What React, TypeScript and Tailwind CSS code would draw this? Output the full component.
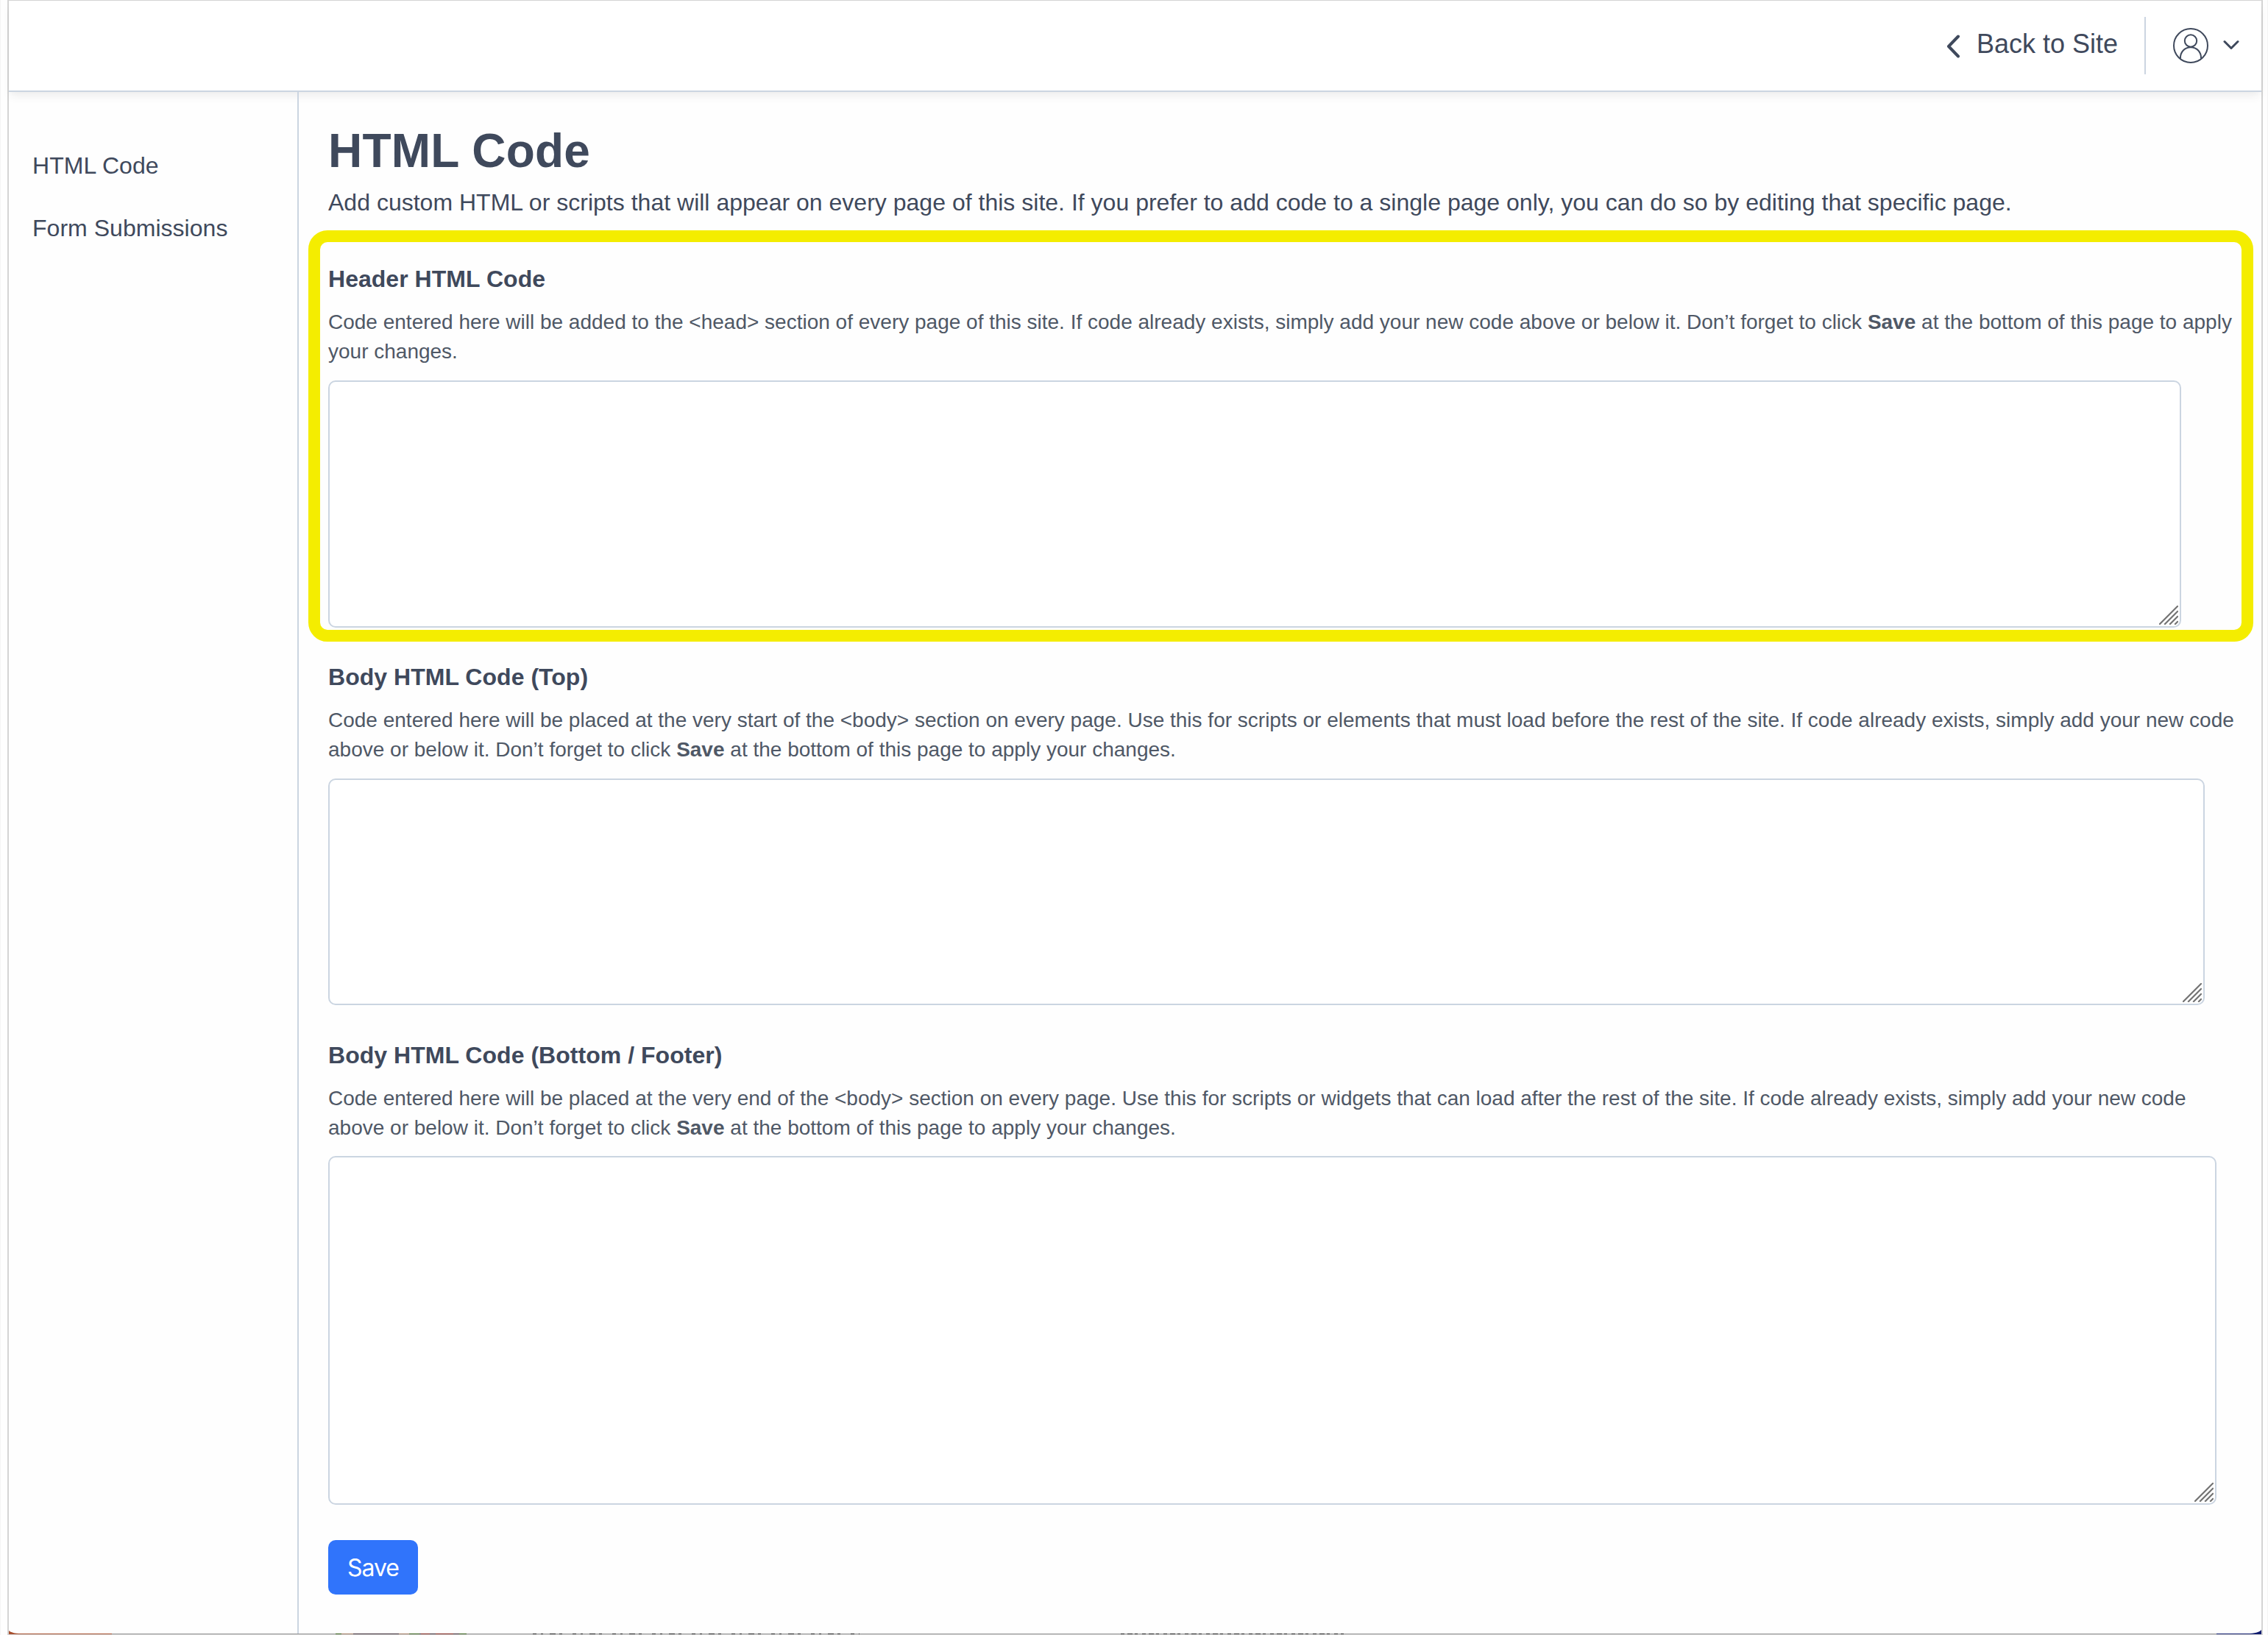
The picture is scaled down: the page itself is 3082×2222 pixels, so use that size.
import type { ReactNode } from "react";

const NavLink = ({ children }: { children: ReactNode }) => (
  <a href="#" className="block tracking-[0.03px] whitespace-nowrap">{children}</a>
);

const ResizeGrip = () => (
  <svg
    className="absolute right-1 bottom-1 h-[26px] w-[26px]"
    viewBox="0 0 26 26"
    stroke="#747474"
    strokeWidth="2.2"
    strokeLinecap="square"
  >
    <path d="M1 25L25 1M8 25L25 8M15 25L25 15M22 25L25 22" />
  </svg>
);

// Sliver of the page underneath that shows below the window's rounded corners
const WindowEdge = () => (
  <svg className="absolute bottom-0 left-0 h-[8px] w-[3082px]" viewBox="0 0 3082 8" fill="none">
    <path d="M12 2C15 4.500 20 6 28 6H152V7H12Z" fill="#a8502f" />
    <path d="M3073 1C3070 4.500 3064 6 3054 6H3012V7H3073Z" fill="#101c6e" />
    <path d="M152 6.500H3012" stroke="#999999" />
    <path d="M456 6.500H634" stroke="#3a2a34" />
    <path d="M456 6.500H464M556 6.500H570M624 6.500H634" stroke="#2f5a12" />
    <path d="M464 6.500H480M542 6.500H556" stroke="#a07a60" />
    <path d="M572 6.500H584M592 6.500H616" stroke="#7a1c14" />
    <path d="M724 6.500H1168" stroke="#222222" strokeDasharray="5 6 3 9 8 5 4 14" />
    <path d="M1523 6.500H1826" stroke="#222222" strokeDasharray="5 4 7 3 4 6" />
    <path d="M12 7.500H3073" stroke="#d6d6d6" />
  </svg>
);

type SectionProps = {
  title: string;
  lines: ReactNode[];
  boxClass: string;
  className: string;
};

const CodeSection = ({ title, lines, boxClass, className }: SectionProps) => (
  <section className={className}>
    <h2 className="text-[32px] leading-[40px] font-bold tracking-[0.03px]">{title}</h2>
    <p className="mt-[19px] text-[28px] leading-[40px] whitespace-nowrap text-[#4f5866]">
      {lines.map((line, i) => (
        <span key={i} className="block">{line}</span>
      ))}
    </p>
    <div className={`relative ${boxClass}`}>
      <textarea
        aria-label={title}
        className="block h-full w-full resize-none rounded-[10px] border-2 border-[#cbd5e1] bg-white"
      />
      <ResizeGrip />
    </div>
  </section>
);

const App = () => {
  return (
    <div className="relative h-[2222px] w-[3082px] overflow-hidden border-x border-[#f5f5f5] bg-[#fefefe] pr-[6px] pl-[9px] font-['Liberation_Sans',Arial,sans-serif] text-[#3f495c]">
      <div className="flex h-full flex-col border-x-2 border-t border-[#d4d4d4]">
        {/* Top bar */}
        <header className="flex h-[124px] shrink-0 items-center justify-end border-b-2 border-[#cbd5e1] bg-white shadow-[0_8px_12px_-2px_rgba(0,0,0,0.06),0_4px_8px_-2px_rgba(0,0,0,0.02)]">
          <a href="#" className="flex items-center">
            <svg className="mt-[1px] h-[32px] w-[19px]" viewBox="0 0 19 32" fill="none" stroke="currentColor" strokeWidth="4" strokeLinecap="round" strokeLinejoin="round">
              <path d="M16 2.5L3 16L16 29.5" />
            </svg>
            <span className="ml-[22px] pb-[4px] text-[36px] leading-[44px] whitespace-nowrap">Back to Site</span>
          </a>
          <div className="ml-[36px] h-[78px] w-[2px] bg-[#cbd5e1]" />
          <button className="mr-[30px] ml-[37px] flex items-center">
            <svg className="h-[48px] w-[48px]" viewBox="0 0 48 48" fill="none" stroke="currentColor" strokeWidth="2">
              <circle cx="24" cy="24" r="23" />
              <circle cx="24" cy="17.5" r="8.200" />
              <path d="M10 41.500C9.500 32.500 16 26.300 24 26.300S38.500 32.500 38 41.500" />
            </svg>
            <svg className="-mt-[2px] ml-[20px] h-[14px] w-[22px]" viewBox="0 0 22 14" fill="none" stroke="currentColor" strokeWidth="3" strokeLinecap="round" strokeLinejoin="round">
              <path d="M2 2.500L11 11.500L20 2.500" />
            </svg>
          </button>
        </header>

        <div className="flex min-h-0 flex-1">
          {/* Sidebar */}
          <nav className="flex w-[394px] shrink-0 flex-col gap-[45px] border-r-2 border-[#cbd5e1] pt-[80px] pl-[32px] text-[32px] leading-[40px]">
            <NavLink>HTML Code</NavLink>
            <NavLink>Form Submissions</NavLink>
          </nav>

          <main className="min-w-0 flex-1 pl-[13px]">
            <h1 className="mt-[40px] ml-[27px] text-[64px] leading-[80px] font-bold tracking-[0.2px] whitespace-nowrap">HTML Code</h1>
            <p className="mt-[10px] ml-[27px] text-[32px] leading-[40px] tracking-[0.012px] whitespace-nowrap">
              Add custom HTML or scripts that will appear on every page of this site. If you prefer to add code to a single page only, you can do so by editing that specific page.
            </p>

            {/* Highlighted section */}
            <div className="mt-[18px] h-[559px] w-[2643px] rounded-[26px] border-[16px] border-[#f4ed00] pl-[11px]">
              <CodeSection
                className="pt-[30px]"
                boxClass="mt-[19px] h-[336px] w-[2518px]"
                title="Header HTML Code"
                lines={[
                  <>Code entered here will be added to the &lt;head&gt; section of every page of this site. If code already exists, simply add your new code above or below it. Don’t forget to click <b>Save</b> at the bottom of this page to apply</>,
                  "your changes.",
                ]}
              />
            </div>

            <div className="pl-[27px]">
              <CodeSection
                className="pt-[28px]"
                boxClass="mt-[19px] h-[308px] w-[2550px]"
                title="Body HTML Code (Top)"
                lines={[
                  <>Code entered here will be placed at the very start of the &lt;body&gt; section on every page. Use this for scripts or elements that must load before the rest of the site. If code already exists, simply add your new code</>,
                  <>above or below it. Don’t forget to click <b>Save</b> at the bottom of this page to apply your changes.</>,
                ]}
              />
              <CodeSection
                className="pt-[48px]"
                boxClass="mt-[18px] h-[474px] w-[2566px]"
                title="Body HTML Code (Bottom / Footer)"
                lines={[
                  <>Code entered here will be placed at the very end of the &lt;body&gt; section on every page. Use this for scripts or widgets that can load after the rest of the site. If code already exists, simply add your new code</>,
                  <>above or below it. Don’t forget to click <b>Save</b> at the bottom of this page to apply your changes.</>,
                ]}
              />
              <button className="mt-[48px] block h-[74px] w-[122px] rounded-[10px] bg-[#3074fb] pt-[2px] font-['Inter',sans-serif] text-[32px] leading-[40px] tracking-[-1px] text-white">
                Save
              </button>
            </div>
          </main>
        </div>
      </div>
      <div className="absolute bottom-0 -left-px">
        <WindowEdge />
      </div>
    </div>
  );
};

export default App;
